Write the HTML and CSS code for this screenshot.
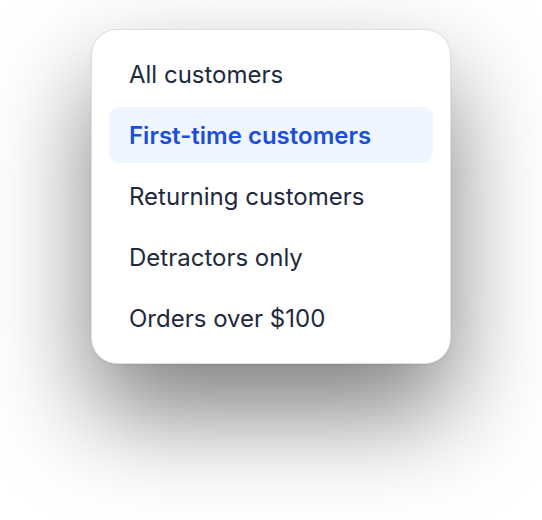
FILE: index.html
```html
<!DOCTYPE html>
<html>
<head>
<meta charset="utf-8">
<link rel="stylesheet" href="styles.css">
</head>
<body>
<div class="stage">
  <ul class="menu">
    <li class="item">All customers</li>
    <li class="item active">First-time customers</li>
    <li class="item">Returning customers</li>
    <li class="item">Detractors only</li>
    <li class="item">Orders over $100</li>
  </ul>
</div>
</body>
</html>
```
FILE: styles.css
```css
html, body {
  margin: 0;
  padding: 0;
  background: #ffffff;
}
.stage {
  box-sizing: border-box;
  min-height: 520px;
  padding: 29px 0 0 91px;
}
.menu {
  list-style: none;
  margin: 0;
  box-sizing: border-box;
  width: 360px;
  padding: 16px 17px 17px 17px;
  background: #ffffff;
  border: 1px solid #e0e0e0;
  border-radius: 26px;
  box-shadow: 0 50px 100px rgba(0, 0, 0, 0.5), 0 1px 2px rgba(0, 0, 0, 0.08);
  display: flex;
  flex-direction: column;
  gap: 5px;
  font-family: Inter, "Liberation Sans", sans-serif;
}
.item {
  height: 56px;
  display: flex;
  align-items: center;
  padding: 0 20px;
  border-radius: 11px;
  font-size: 24px;
  color: #1e293b;
}
.item.active {
  background: #eff6ff;
  color: #1d4ed8;
  font-weight: 600;
}
```
